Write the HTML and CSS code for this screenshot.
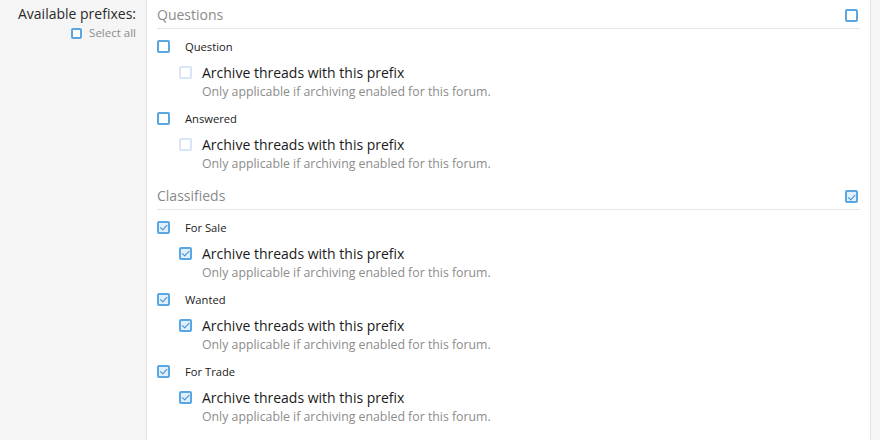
FILE: index.html
```html
<!DOCTYPE html>
<html>
<head>
<meta charset="utf-8">
<link rel="stylesheet" href="styles.css">
</head>
<body>
<div class="form-row">
  <div class="label-col">
    <div class="row-label">Available prefixes:</div>
    <label class="select-all"><span class="cb"></span>Select all</label>
  </div>
  <div class="input-col">
    <div class="group">
      <div class="group-head"><span class="group-title">Questions</span><span class="cb"></span></div>
      <div class="item">
        <div class="item-line"><span class="cb"></span><span class="item-name">Question</span></div>
        <div class="sub">
          <div class="sub-line"><span class="cb disabled"></span><span class="sub-text">Archive threads with this prefix</span></div>
          <div class="hint">Only applicable if archiving enabled for this forum.</div>
        </div>
      </div>
      <div class="item">
        <div class="item-line"><span class="cb"></span><span class="item-name">Answered</span></div>
        <div class="sub">
          <div class="sub-line"><span class="cb disabled"></span><span class="sub-text">Archive threads with this prefix</span></div>
          <div class="hint">Only applicable if archiving enabled for this forum.</div>
        </div>
      </div>
    </div>
    <div class="group">
      <div class="group-head"><span class="group-title">Classifieds</span><span class="cb checked"></span></div>
      <div class="item">
        <div class="item-line"><span class="cb checked"></span><span class="item-name">For Sale</span></div>
        <div class="sub">
          <div class="sub-line"><span class="cb checked"></span><span class="sub-text">Archive threads with this prefix</span></div>
          <div class="hint">Only applicable if archiving enabled for this forum.</div>
        </div>
      </div>
      <div class="item">
        <div class="item-line"><span class="cb checked"></span><span class="item-name">Wanted</span></div>
        <div class="sub">
          <div class="sub-line"><span class="cb checked"></span><span class="sub-text">Archive threads with this prefix</span></div>
          <div class="hint">Only applicable if archiving enabled for this forum.</div>
        </div>
      </div>
      <div class="item">
        <div class="item-line"><span class="cb checked"></span><span class="item-name">For Trade</span></div>
        <div class="sub">
          <div class="sub-line"><span class="cb checked"></span><span class="sub-text">Archive threads with this prefix</span></div>
          <div class="hint">Only applicable if archiving enabled for this forum.</div>
        </div>
      </div>
    </div>
  </div>
  <div class="edge-col"></div>
</div>
</body>
</html>
```
FILE: styles.css
```css
html, body {
  margin: 0;
  padding: 0;
  background: #fff;
}
body {
  font-family: "Open Sans", "Noto Sans", sans-serif;
  color: #141414;
  width: 880px;
  height: 440px;
  overflow: hidden;
}
.form-row {
  display: grid;
  grid-template-columns: 147px 1fr 10px;
  height: 440px;
}
.label-col {
  background: #f5f5f5;
  border-right: 1px solid #e4e4e4;
  display: flex;
  flex-direction: column;
  align-items: flex-end;
  padding: 4px 10px 0 0;
}
.row-label {
  font-size: 14px;
  line-height: 20px;
  color: #2a2a2a;
}
.select-all {
  display: flex;
  align-items: center;
  gap: 7px;
  font-size: 11.5px;
  line-height: 16px;
  color: #8c8c8c;
  margin-top: 1px;
}
.select-all .cb {
  width: 11px;
  height: 11px;
}
.input-col {
  background: #fff;
  padding: 3px 10px 0 10px;
}
.edge-col {
  background: #f5f5f5;
  border-left: 1px solid #e4e4e4;
}
.group-head {
  display: flex;
  align-items: center;
  justify-content: space-between;
  height: 25px;
  padding-bottom: 0;
  border-bottom: 1px solid #e6e6e6;
  padding-right: 2px;
}
.group-title {
  font-size: 14px;
  color: #8a8a8a;
  line-height: 20px;
  margin-top: -1px;
}
.group + .group {
  margin-top: 12px;
}
.item {
  padding-top: 9px;
}
.item-line {
  display: flex;
  align-items: center;
  height: 16px;
}
.item-name {
  font-size: 11.2px;
  color: #1a1a1a;
  margin-left: 15px;
}
.sub {
  padding-left: 22px;
  padding-top: 6px;
}
.sub-line {
  display: flex;
  align-items: center;
  height: 24px;
}
.sub-text {
  font-size: 14px;
  color: #1a1a1a;
  margin-left: 10px;
}
.hint {
  font-size: 12.3px;
  color: #8c8c8c;
  margin-left: 23px;
  line-height: 16px;
  margin-bottom: 1px;
}
.cb {
  box-sizing: border-box;
  width: 13px;
  height: 13px;
  border: 2px solid #5aa6e0;
  border-radius: 2px;
  background: #fff;
  flex: none;
  position: relative;
}
.cb.disabled {
  border-color: #d6e6f4;
}
.cb.checked {
  background: #e0effb;
}
.cb.checked::after {
  content: "";
  position: absolute;
  left: 2.5px;
  top: 0.5px;
  width: 2.5px;
  height: 5.5px;
  border: solid #3d8fd6;
  border-width: 0 1.6px 1.6px 0;
  transform: rotate(45deg);
}
```
